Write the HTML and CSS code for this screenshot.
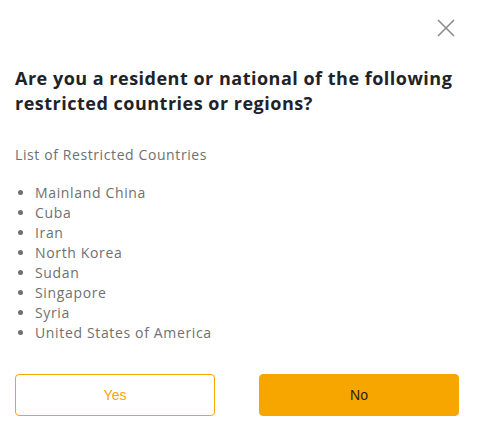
FILE: index.html
```html
<!DOCTYPE html>
<html>
<head>
<meta charset="utf-8">
<link rel="stylesheet" href="styles.css">
</head>
<body>
<div class="dialog">
  <div class="top">
    <button class="close" aria-label="Close">
      <svg width="18" height="18" viewBox="0 0 18 18"><path d="M1 1L17 17M17 1L1 17" stroke="#8a8a8a" stroke-width="1.6" fill="none"/></svg>
    </button>
  </div>
  <h1 class="title">Are you a resident or national of the following restricted countries or regions?</h1>
  <p class="sub">List of Restricted Countries</p>
  <ul class="list">
    <li>Mainland China</li>
    <li>Cuba</li>
    <li>Iran</li>
    <li>North Korea</li>
    <li>Sudan</li>
    <li>Singapore</li>
    <li>Syria</li>
    <li>United States of America</li>
  </ul>
  <div class="actions">
    <button class="btn yes">Yes</button>
    <button class="btn no">No</button>
  </div>
</div>
</body>
</html>
```
FILE: styles.css
```css
html, body { margin: 0; padding: 0; background: #fff; }
.dialog {
  width: 478px;
  box-sizing: border-box;
  padding: 0 19px 0 15px;
  font-family: "Open Sans", "Noto Sans", sans-serif;
}
.top { display: flex; justify-content: flex-end; padding-top: 19px; padding-right: 4px; height: 18px; }
.close { border: 0; background: none; padding: 0; width: 18px; height: 18px; cursor: pointer; }
.close svg { display: block; }
.title {
  margin: 29px 0 0 0;
  font-size: 18px;
  line-height: 25px;
  font-weight: 700;
  color: #1e2329;
  letter-spacing: 0.5px;
}
.sub {
  margin: 29px 0 0 0;
  font-size: 14px;
  line-height: 20px;
  color: #707070;
  letter-spacing: 0.6px;
}
.list {
  margin: 18px 0 0 0;
  padding-left: 20px;
  font-size: 14px;
  line-height: 20px;
  color: #707070;
  letter-spacing: 0.65px;
}
.actions { display: flex; gap: 44px; margin-top: 31px; }
.btn {
  width: 200px; height: 42px; box-sizing: border-box;
  border-radius: 4px; font-family: "Liberation Sans", Arial, sans-serif;
  font-size: 14px; cursor: pointer;
}
.yes { background: #fff; border: 1px solid #f7a600; color: #f7a600; }
.no { background: #f7a600; border: 1px solid #f7a600; color: #2b2100; }
```
